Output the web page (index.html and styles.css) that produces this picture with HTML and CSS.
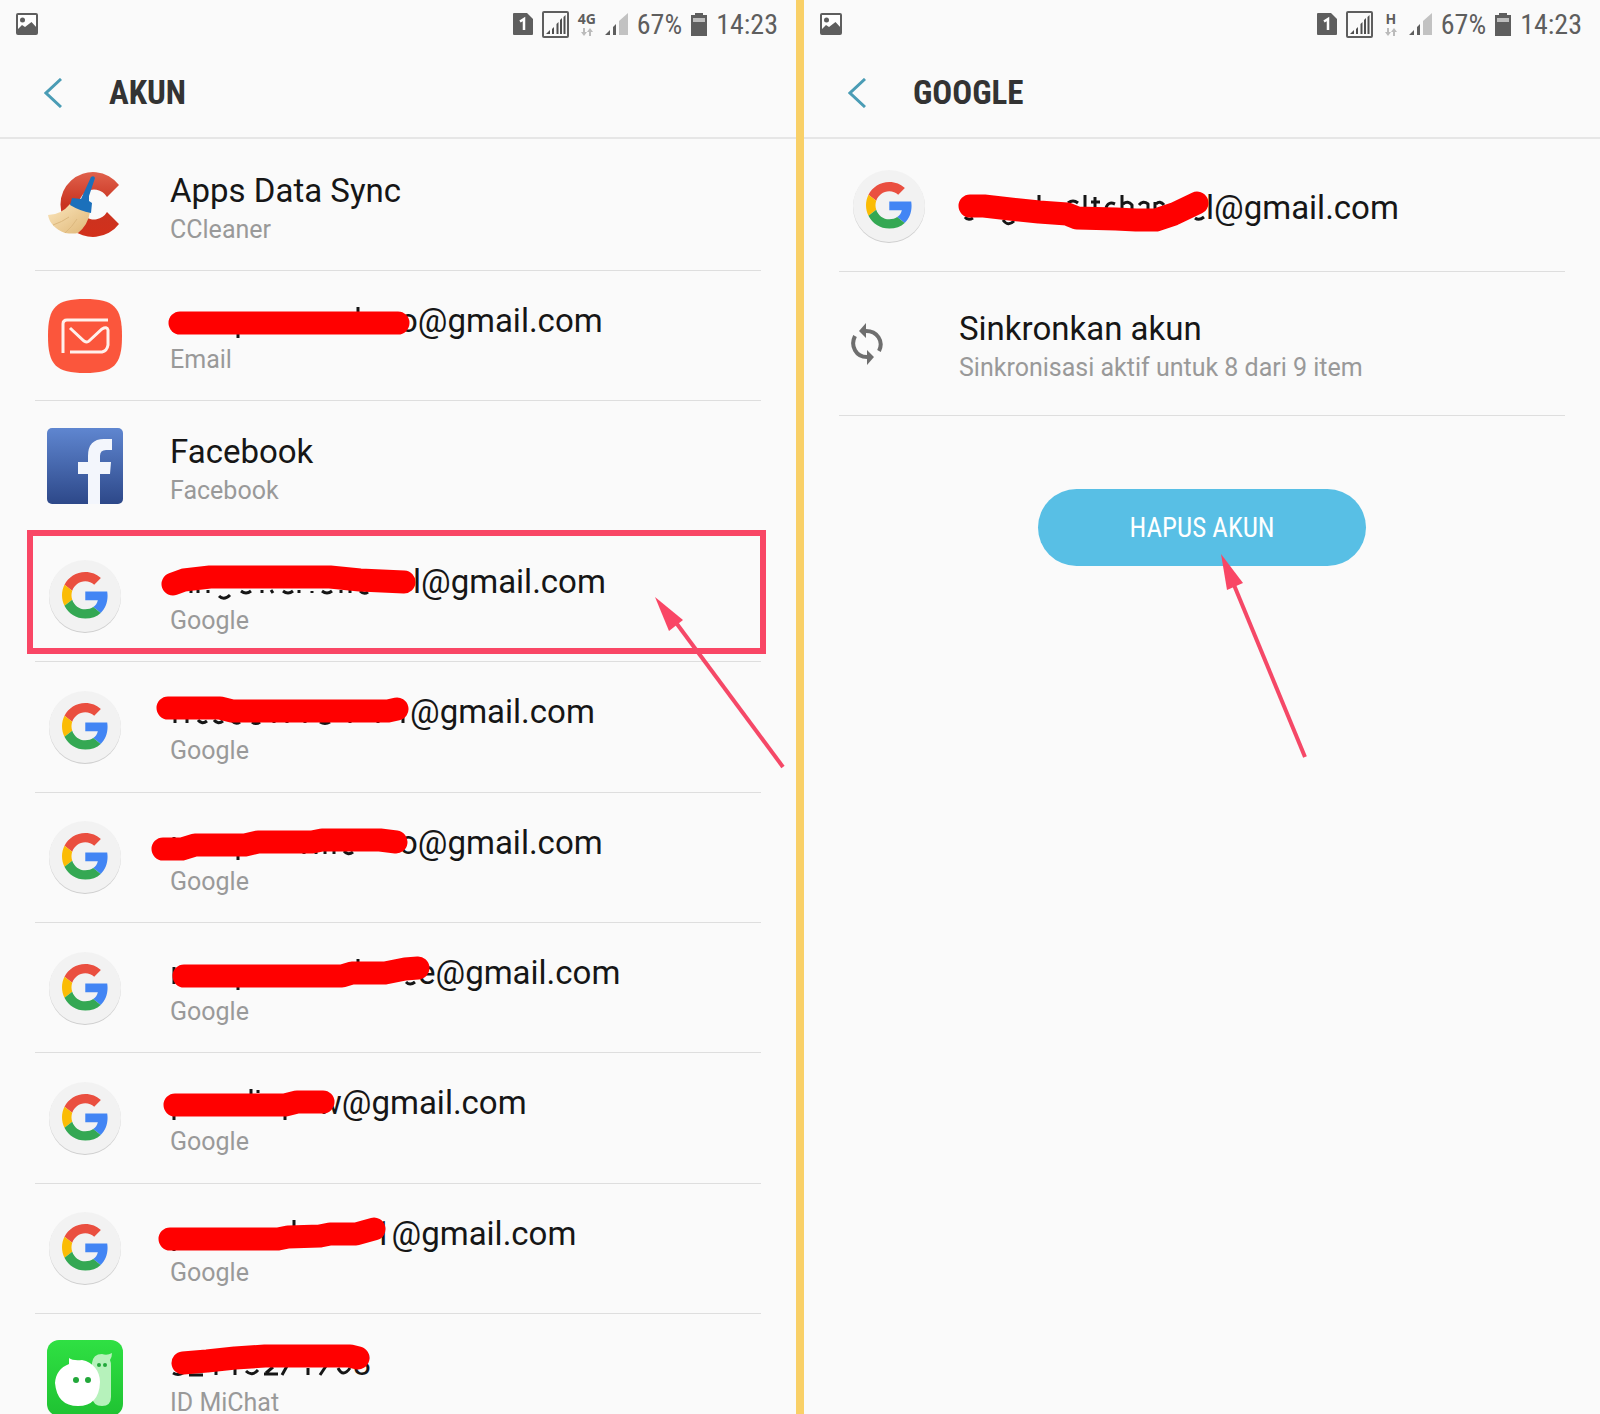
FILE: index.html
```html
<!DOCTYPE html>
<html lang="id">
<head>
    <meta charset="utf-8">
    <title>Akun</title>
    <link rel="stylesheet" href="styles.css">
</head>
<body>

    <!-- shared icons -->
    <svg class="defs" width="0" height="0" aria-hidden="true">
        <defs>
            <linearGradient id="red" x1="0" y1="0" x2="0" y2="1"><stop offset="0" stop-color="#e0614c"/><stop offset=".5" stop-color="#c93421"/><stop offset="1" stop-color="#d2301b"/></linearGradient>
            <linearGradient id="straw" x1="0" y1="0" x2="1" y2="1"><stop offset="0" stop-color="#fbe6bd"/><stop offset="1" stop-color="#dfb777"/></linearGradient>
            <linearGradient id="fb" x1="0" y1="0" x2="0" y2="1"><stop offset="0" stop-color="#5f86d0"/><stop offset="1" stop-color="#2d4889"/></linearGradient>
            <linearGradient id="green" x1="0" y1="0" x2="0" y2="1"><stop offset="0" stop-color="#2fe043"/><stop offset="1" stop-color="#1fc232"/></linearGradient>
        </defs>
        <symbol id="picture" viewBox="0 0 22 22">
            <rect x="1" y="1" width="20" height="20" rx="1" fill="#fff" stroke="#5e5e5e" stroke-width="2"/>
            <circle cx="6.500" cy="7" r="2.500" fill="#5e5e5e"/>
            <path d="M1 17 6 12 9 14 15.500 9 21 15V21H1Z" fill="#5e5e5e"/>
        </symbol>
        <symbol id="sim" viewBox="0 0 20 22">
            <path d="M1 0H14L20 6V21Q20 22 19 22H1Q0 22 0 21V1Q0 0 1 0Z" fill="#5e5e5e"/>
            <path d="M7 8.500 11 6V17" fill="none" stroke="#fff" stroke-width="2.500"/>
        </symbol>
        <symbol id="signal-box" viewBox="0 0 27 27">
            <rect x="1" y="1" width="25" height="25" rx="1" fill="none" stroke="#5e5e5e" stroke-width="2"/>
            <path d="M4 23 8 19V23ZM10 18 12 16V23H10ZM14.500 13 16.500 11V23H14.500ZM18 9 20 7V23H18ZM21.500 6 23.500 4V23H21.500Z" fill="#4f4f4f"/>
        </symbol>
        <symbol id="arrows" viewBox="0 0 12 8">
            <path d="M2 0H4V4H6L3 8 0 4H2ZM8 8H10V4H12L9 0 6 4H8Z" fill="#bbb"/>
        </symbol>
        <symbol id="signal" viewBox="0 0 23 22">
            <path d="M0 22 5 17V22ZM8 14 11 11V22H8Z" fill="#5e5e5e"/>
            <path d="M14 8 23 0V22H14Z" fill="#c2c2c2"/>
        </symbol>
        <symbol id="battery" viewBox="0 0 16 23">
            <path d="M4 0H12V2H16V23H0V2H4Z" fill="#5e5e5e"/>
            <path d="M2 5H14V9H2Z" fill="#bdbdbd"/>
        </symbol>
        <symbol id="google" viewBox="0 0 76 76">
            <circle cx="38" cy="39" r="36" fill="#cfcfcf"/>
            <circle cx="38" cy="38" r="36" fill="#f2f2f2"/>
            <g transform="translate(15 14) scale(.97)">
                <path fill="#ea4f40" d="M24 9.500c3.540 0 6.710 1.220 9.210 3.600l6.850-6.850C35.900 2.380 30.470 0 24 0 14.620 0 6.510 5.380 2.560 13.220l7.980 6.190C12.430 13.720 17.740 9.500 24 9.500z"/>
                <path fill="#4285f4" d="M46.980 24.550c0-1.570-.15-3.090-.38-4.550H24v9.020h12.940c-.58 2.960-2.260 5.480-4.780 7.180l7.730 6c4.510-4.180 7.090-10.360 7.090-17.650z"/>
                <path fill="#fbbc05" d="M10.530 28.590c-.48-1.450-.76-2.990-.76-4.590s.27-3.140.76-4.590l-7.980-6.190C.92 16.460 0 20.120 0 24c0 3.880.92 7.540 2.560 10.780l7.970-6.190z"/>
                <path fill="#34a853" d="M24 48c6.480 0 11.930-2.130 15.890-5.810l-7.730-6c-2.150 1.450-4.920 2.300-8.160 2.300-6.260 0-11.570-4.220-13.470-9.910l-7.980 6.190C6.510 42.620 14.620 48 24 48z"/>
            </g>
        </symbol>
    </svg>

    <div class="screens">

        <main class="screen">
            <div class="status">
                <svg width="22" height="22" class="notice"><use href="#picture"/></svg>
                <svg width="20" height="22"><use href="#sim"/></svg>
                <svg width="27" height="27"><use href="#signal-box"/></svg>
                <span class="net">4G<svg width="12" height="8"><use href="#arrows"/></svg></span>
                <svg width="23" height="22"><use href="#signal"/></svg>
                <span>67%</span>
                <svg width="16" height="23"><use href="#battery"/></svg>
                <span>14:23</span>
            </div>
            <header class="bar">
                <button class="back" type="button" aria-label="Kembali">
                    <svg width="18" height="30" viewBox="0 0 18 30"><path d="M17 1 2 15 17 29" fill="none" stroke="#4a9cb5" stroke-width="3"/></svg>
                </button>
                <h1>AKUN</h1>
            </header>

            <ul class="list accounts">
                <li>
                    <a href="#" class="row">
                        <svg class="icon" viewBox="0 0 76 76">
                            <path d="M72 18A32.500 32.500 0 1 0 72 57L60 45A15 15 0 1 1 60 30Z" fill="url(#red)"/>
                            <path d="M23 37Q14 48 1 48Q3 60 18 66Q26 67 31 66Q41 58 43 45Z" fill="url(#straw)"/>
                            <path d="M6 58Q15 55 22 50M18 66Q25 60 30 52" fill="none" stroke="#dcb87e"/>
                            <path d="M44 10Q47 8 48 11L42 29V34L45 36 44 46Q33 44 23 38L25 31 34 32Z" fill="#1b70bb"/>
                        </svg>
                        <span class="text"><span class="name">Apps Data Sync</span><span class="type">CCleaner</span></span>
                    </a>
                </li>
                <li>
                    <a href="#" class="row">
                        <svg class="icon" viewBox="0 0 76 76">
                            <path d="M38 1C67 1 75 9 75 38S67 75 38 75 1 67 1 38 9 1 38 1Z" fill="#fb563c"/>
                            <path d="M61 22H20Q16 22 16 26V55M23 54H55Q60 53 61 47V32Q60 28 55 31L42 43Q40 45 37 43L23 30" fill="none" stroke="#fff1ec" stroke-width="3"/>
                        </svg>
                        <span class="text">
                            <span class="name"><svg class="mark" width="229" height="44"><path class="bit" d="M68 34V39M188 8V16"/><path d="M10 24H228"/></svg>o@gmail.com</span>
                            <span class="type">Email</span>
                        </span>
                    </a>
                </li>
                <li>
                    <a href="#" class="row">
                        <svg class="icon" viewBox="0 0 76 76">
                            <rect width="76" height="76" rx="5" fill="url(#fb)"/>
                            <path d="M41 76V46H31V34H41V28Q41 11 57 11H65V22H59Q53 22 53 28V34H64L63 46H53V76Z" fill="#f3f6fc"/>
                        </svg>
                        <span class="text"><span class="name">Facebook</span><span class="type">Facebook</span></span>
                    </a>
                </li>
                <li class="picked">
                    <a href="#" class="row">
                        <svg class="icon"><use href="#google"/></svg>
                        <span class="text">
                            <span class="name"><svg class="mark" width="243" height="44"><path class="bit" d="M21 30V33M28 30V33M38 30V33M49 36Q54 41 60 35M71 31Q76 35 81 31M92 30V33M101 30 103 33M113 31Q118 35 123 31M129 30V33M142 31V33M152 31Q157 35 162 31M171 30V33M180 30V33M190 31Q194 35 198 32"/><path d="M3 24 14 20 40 17H160L190 20 234 22"/></svg>l@gmail.com</span>
                            <span class="type">Google</span>
                        </span>
                    </a>
                    <svg class="arrow" width="130" height="172" viewBox="0 0 130 172">
                        <path d="M22 27 128 170" stroke="#f54867" stroke-width="4"/>
                        <path d="M0 0 28 23 14 34Z" fill="#f94665"/>
                    </svg>
                </li>
                <li>
                    <a href="#" class="row">
                        <svg class="icon"><use href="#google"/></svg>
                        <span class="text">
                            <span class="name"><svg class="mark" width="240" height="44"><path class="bit" d="M5 28V33M17 28V33M28 30Q32 35 37 31M44 30Q48 35 53 31M62 31Q66 35 70 32M82 32Q86 35 90 32M104 31V33M117 31V33M135 31V33M150 32Q155 35 160 32M180 31V33M208 31V33M233 24V33"/><path d="M-2 18H50L62 21H218L227 19"/></svg>@gmail.com</span>
                            <span class="type">Google</span>
                        </span>
                    </a>
                </li>
                <li>
                    <a href="#" class="row">
                        <svg class="icon"><use href="#google"/></svg>
                        <span class="text">
                            <span class="name"><svg class="mark" width="229" height="44"><path class="bit" d="M4 16V22M68 30V39M134 28V33M146 28V33M155 28V33M164 28V33M174 30Q178 35 183 31"/><path d="M-7 28H12L25 24H75L88 21H142L152 19H210L226 21"/></svg>o@gmail.com</span>
                            <span class="type">Google</span>
                        </span>
                    </a>
                </li>
                <li>
                    <a href="#" class="row">
                        <svg class="icon"><use href="#google"/></svg>
                        <span class="text">
                            <span class="name"><svg class="mark" width="248" height="44"><path class="bit" d="M4 16V33M68 34V39M188 8V14M236 31Q240 35 245 31"/><path d="M14 25H172L182 22H215L235 18 248 17"/></svg>e@gmail.com</span>
                            <span class="type">Google</span>
                        </span>
                    </a>
                </li>
                <li>
                    <a href="#" class="row">
                        <svg class="icon"><use href="#google"/></svg>
                        <span class="text">
                            <span class="name"><svg class="mark" width="147" height="44"><path class="bit" d="M4 34V39M81 8V14M88 9V12M115 34V39"/><path d="M5 24H115L127 21H153"/></svg>w@gmail.com</span>
                            <span class="type">Google</span>
                        </span>
                    </a>
                </li>
                <li>
                    <a href="#" class="row">
                        <svg class="icon"><use href="#google"/></svg>
                        <span class="text">
                            <span class="name"><svg class="mark" width="203" height="44"><path class="bit" d="M4 36V39M124 8V15"/><path d="M0 27H108L118 25 150 24 160 22H186L204 17"/></svg>1@gmail.com</span>
                            <span class="type">Google</span>
                        </span>
                    </a>
                </li>
                <li>
                    <a href="#" class="row">
                        <svg class="icon" viewBox="0 0 76 76">
                            <rect width="76" height="76" rx="12" fill="url(#green)"/>
                            <path d="M45 23Q46 14 55 14Q60 16 65 13Q65 17 63 20Q64 22 64 26V57Q64 66 55 66T45 57Z" fill="#b6f2bb"/>
                            <path d="M22 18Q26 21 35 20C46 22 53 31 53 42Q52 66 31 66T8 43Q9 29 22 24Z" fill="#fff"/>
                            <g fill="#22a83a"><circle cx="29" cy="40" r="3"/><circle cx="41" cy="40" r="3"/><circle cx="52" cy="25" r="2"/><circle cx="58" cy="25" r="2"/></g>
                        </svg>
                        <span class="text">
                            <span class="name"><svg class="mark" width="183" height="44"><path class="bit" d="M3 31Q8 34 13 31M19 33H33M46 29V33M65 27V33M76 29Q82 35 88 28M94 32H108M96 31 103 25M112 33 117 24M138 26V33M150 33 156 24M168 26Q173 36 180 26"/><path d="M13 21 37 19 65 16 95 14H180L188 16"/></svg>3</span>
                            <span class="type">ID MiChat</span>
                        </span>
                    </a>
                </li>
            </ul>
        </main>

        <section class="screen">
            <div class="status">
                <svg width="22" height="22" class="notice"><use href="#picture"/></svg>
                <svg width="20" height="22"><use href="#sim"/></svg>
                <svg width="27" height="27"><use href="#signal-box"/></svg>
                <span class="net">H<svg width="12" height="8"><use href="#arrows"/></svg></span>
                <svg width="23" height="22"><use href="#signal"/></svg>
                <span>67%</span>
                <svg width="16" height="23"><use href="#battery"/></svg>
                <span>14:23</span>
            </div>
            <header class="bar">
                <button class="back" type="button" aria-label="Kembali">
                    <svg width="18" height="30" viewBox="0 0 18 30"><path d="M17 1 2 15 17 29" fill="none" stroke="#4a9cb5" stroke-width="3"/></svg>
                </button>
                <h1>GOOGLE</h1>
            </header>

            <ul class="list detail">
                <li>
                    <a href="#" class="row">
                        <svg class="icon"><use href="#google"/></svg>
                        <span class="text">
                            <span class="name"><svg class="mark" width="247" height="44"><path class="bit" d="M6 31Q9 35 14 32M44 34Q49 41 55 35M80 9V16M109 17Q114 13 119 17M126 9V22M136 11V22M132 16H141M147 22Q149 15 156 18M163 9V23M164 18Q169 14 173 19V24M180 19Q184 14 189 18V24M196 16V24M197 18Q201 14 205 19M236 32Q240 35 245 31"/><path d="M11 20H25L51 23 80 26 108 28 118 32 157 33 177 34H197L215 28 238 17"/></svg>l@gmail.com</span>
                        </span>
                    </a>
                </li>
                <li>
                    <a href="#" class="row">
                        <span class="icon">
                            <svg width="32" height="42" viewBox="0 0 32 42" fill="none" stroke="#6e6e6e" stroke-width="4">
                                <path d="M15 8C26 8 33 18 28 28"/><path d="M4 13C-1 23 5 34 16 34"/>
                                <path d="M15 0V15L8 8ZM16 27V42L23 34Z" fill="#6e6e6e" stroke="none"/>
                            </svg>
                        </span>
                        <span class="text"><span class="name">Sinkronkan akun</span><span class="type">Sinkronisasi aktif untuk 8 dari 9 item</span></span>
                    </a>
                </li>
            </ul>

            <div class="action">
                <button class="remove" type="button">HAPUS AKUN</button>
                <svg class="arrow" width="86" height="205" viewBox="0 0 86 205">
                    <path d="M13 31 84 203" stroke="#f54867" stroke-width="4"/>
                    <path d="M0 0 22 29 6 36Z" fill="#f94665"/>
                </svg>
            </div>
        </section>

    </div>
</body>
</html>
```

FILE: styles.css
```css
body {
    margin: 0;
    background-color: #fafafa;
    font-family: Roboto, sans-serif;
    color: #161616;
}

.defs {
    display: block;
}

.screens {
    display: grid;
    grid-template-columns: 1fr 1fr;
    gap: 8px;
    background-color: #f9d067;
    height: 100vh;
    min-height: 1200px;
    overflow: hidden;
}

.screen {
    display: flex;
    flex-direction: column;
    background-color: #fafafa;
    min-width: 0;
}

/* status bar */
.status {
    display: flex;
    align-items: center;
    gap: 9px;
    height: 48px;
    padding: 0 18px 0 16px;
    color: #5e5e5e;
    font-family: "Roboto Condensed", "Liberation Sans Narrow", Roboto, sans-serif;
    font-size: 28px;
}

.notice {
    margin-right: auto;
}

.net {
    display: flex;
    flex-direction: column;
    align-items: center;
    gap: 2px;
    width: 18px;
    font-family: "Open Sans", sans-serif;
    font-size: 14px;
    font-weight: 700;
    line-height: 14px;
}

/* title bar */
.bar {
    display: flex;
    align-items: center;
    gap: 47px;
    height: 89px;
    padding-left: 44px;
    border-bottom: 2px solid #e6e6e6;
}

.back {
    display: flex;
    padding: 0;
    border: 0;
    background: none;
}

.bar h1 {
    margin: 0;
    font-family: "Roboto Condensed", "Liberation Sans Narrow", Roboto, sans-serif;
    font-size: 33px;
    font-weight: 700;
    color: #333;
}

/* lists */
.list {
    display: grid;
    margin: 0 35px;
    padding: 0;
    list-style: none;
}

.accounts {
    flex: 1;
    grid-template-rows: 132px repeat(8, minmax(0, 1fr)) 100px;
}

.detail {
    grid-template-rows: 133px 144px;
}

.list li {
    position: relative;
    border-bottom: 1px solid #dedede;
}

.accounts li:last-child {
    border-bottom: 0;
}

.row {
    display: flex;
    align-items: center;
    gap: 47px;
    box-sizing: border-box;
    height: 100%;
    padding-left: 12px;
    color: inherit;
    text-decoration: none;
}

.detail .row {
    gap: 32px;
}

.list li:first-child .row {
    padding-top: 1px;
}

.accounts li:last-child .row {
    align-items: flex-start;
    padding-top: 26px;
}

.icon {
    flex: none;
    width: 76px;
    height: 76px;
    display: flex;
    align-items: center;
}

.text {
    display: flex;
    flex-direction: column;
    gap: 1px;
    padding-top: 4px;
}

.accounts li:last-child .text {
    padding-top: 2px;
}

.name {
    display: flex;
    font-size: 33px;
    line-height: 44px;
    white-space: nowrap;
}

.type {
    font-size: 25px;
    line-height: 32px;
    color: #999;
    white-space: nowrap;
}

/* marker scribble over the address */
.mark {
    position: relative;
    z-index: 1;
    overflow: visible;
    fill: none;
    stroke: #f00;
    stroke-width: 23px;
    stroke-linecap: round;
    stroke-linejoin: round;
}

.mark .bit {
    stroke: #161616;
    stroke-width: 3px;
    stroke-linecap: butt;
}

.picked::before {
    content: "";
    position: absolute;
    top: -2px;
    right: -5px;
    bottom: 7px;
    left: -8px;
    border: 6px solid #f94665;
    pointer-events: none;
}

.arrow {
    position: absolute;
    pointer-events: none;
}

.picked .arrow {
    top: 65px;
    right: -24px;
    z-index: 2;
}

.action {
    position: relative;
    align-self: center;
    margin-top: 73px;
}

.remove {
    width: 328px;
    height: 77px;
    border: 0;
    border-radius: 39px;
    background-color: #58bfe5;
    color: #fff;
    font-family: "Roboto Condensed", "Liberation Sans Narrow", Roboto, sans-serif;
    font-size: 27px;
}

.action .arrow {
    top: 65px;
    left: 183px;
}
```
